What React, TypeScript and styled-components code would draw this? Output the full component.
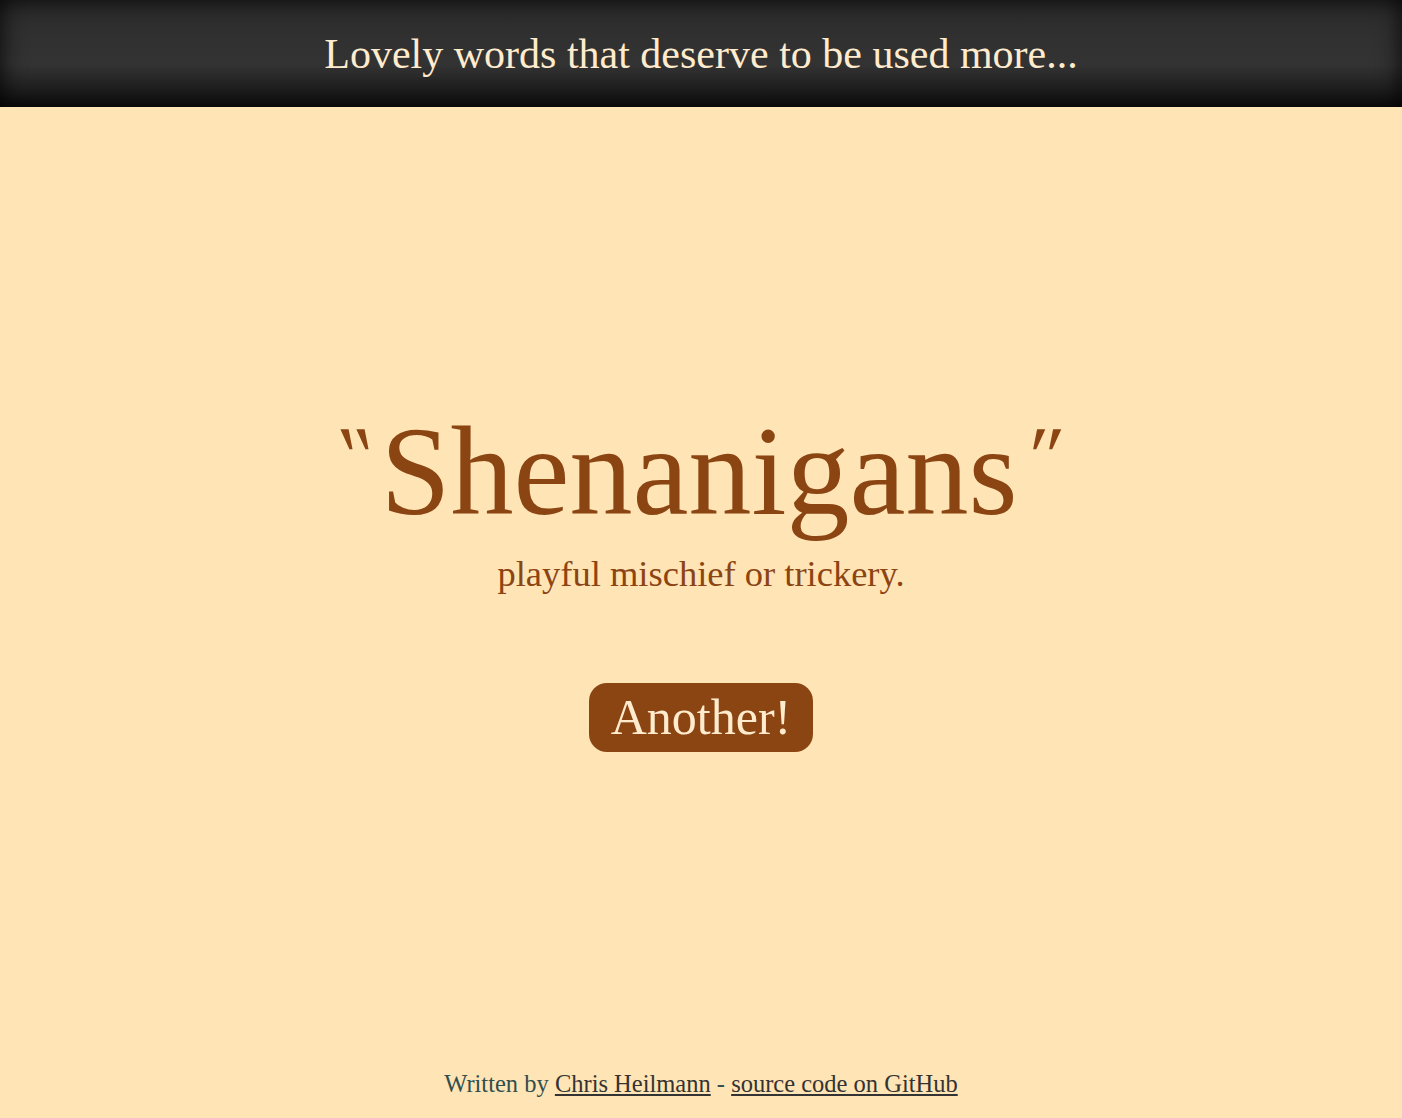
import styled, { createGlobalStyle } from "styled-components"

const Global = createGlobalStyle`
  html, body {
    margin: 0;
    padding: 0;
    background: #ffe4b5;
  }
  body {
    font-family: "Liberation Serif", "DejaVu Serif", serif;
  }
`

export default function App(): JSX.Element {
  return (
    <Page>
      <Global />
      <Header>
        <h1>Lovely words that deserve to be used more...</h1>
      </Header>
      <Main>
        <Word>Shenanigans</Word>
        <Definition>playful mischief or trickery.</Definition>
        <AnotherButton>Another!</AnotherButton>
      </Main>
      <Footer>
        Written by <a href="#">Chris Heilmann</a> - <a href="#">source code on GitHub</a>
      </Footer>
    </Page>
  )
}

const Page = styled.div`
  min-height: 100vh;
  display: flex;
  flex-direction: column;
`

const Header = styled.header`
  height: 107px;
  display: flex;
  align-items: center;
  justify-content: center;
  background: linear-gradient(to bottom, #2c2c2c 0%, #333 60%, #111 100%);
  box-shadow: inset 0 0 24px rgba(0, 0, 0, 0.9);

  h1 {
    margin: 0;
    font-weight: normal;
    font-size: 42px;
    color: #ffebcd;
  }
`

const Main = styled.main`
  flex: 1;
  display: flex;
  flex-direction: column;
  align-items: center;
  justify-content: center;
  padding: 4px 0 20px;
`

const Word = styled.h2`
  margin: 0;
  font-weight: normal;
  font-size: 126px;
  line-height: 1;
  color: #8b4513;

  &::before,
  &::after {
    content: '"';
    font-size: 85px;
    line-height: 1;
    vertical-align: 29px;
    display: inline-block;
  }
  &::before {
    margin-right: 2px;
    transform: skewX(18deg);
  }
  &::after {
    margin-left: 6px;
    transform: skewX(-18deg);
  }
`

const Definition = styled.p`
  margin: 17px 0 0;
  font-size: 36.5px;
  color: #8b4513;
`

const AnotherButton = styled.button`
  margin-top: 88px;
  border: none;
  background: #8b4513;
  color: #ffebcd;
  font-family: inherit;
  font-size: 50px;
  line-height: 1.2;
  padding: 4px 22px 5px;
  border-radius: 18px;
  cursor: pointer;
`

const Footer = styled.footer`
  text-align: center;
  padding: 0 0 20px;
  font-size: 24.5px;
  color: #2f4f4f;

  a {
    color: #333;
  }
`
